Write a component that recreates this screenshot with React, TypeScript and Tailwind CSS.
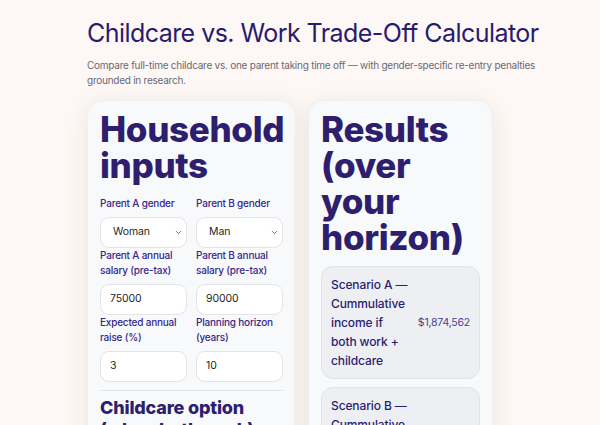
import { ChevronDown } from 'lucide-react';

const SelectBox = ({ value }: { value: string }) => (
  <div className="flex h-[31px] items-center justify-between rounded-[9px] border border-[#e3e3e8] bg-white pl-[12px] pr-[3px] text-[10.5px] tracking-[-0.01em] text-[#1f1f24]">
    <span>{value}</span>
    <ChevronDown className="h-[9px] w-[9px] text-[#444]" strokeWidth={2} />
  </div>
);

const InputBox = ({ value }: { value: string }) => (
  <div className="flex h-[31px] items-center rounded-[9px] border border-[#e3e3e8] bg-white px-[9px] text-[10.5px] tracking-[-0.01em] text-[#1f1f24]">
    {value}
  </div>
);

const Field = ({ label, children }: { label: string; children: React.ReactNode }) => (
  <div className="flex flex-col">
    <label className="mb-[5px] text-[10px] font-medium leading-[15.5px] tracking-[-0.02em] text-[#35288a]">{label}</label>
    {children}
  </div>
);

const ScenarioCard = ({ title, value }: { title: string; value?: string }) => (
  <div className="flex items-center justify-between rounded-[12px] border border-[#e2e2e8] bg-[#eeeff2] py-[8px] pl-[9px] pr-[9px]">
    <p className="w-[78px] text-[12px] font-medium leading-[19px] tracking-[-0.01em] text-[#2a1d72]">{title}</p>
    {value && <span className="text-[10.5px] tracking-[-0.02em] text-[#4b3f90]">{value}</span>}
  </div>
);

export default function App() {
  return (
    <div className="min-h-screen overflow-hidden bg-[#fdf8f5] pl-[87px] pt-[17px] font-['Inter',sans-serif]">
      <h1 className="text-[25px] font-normal leading-[32px] tracking-[-0.022em] text-[#2a1a6e]">
        Childcare vs. Work Trade-Off Calculator
      </h1>
      <p className="mt-[9px] w-[460px] text-[10px] leading-[15px] tracking-[-0.025em] text-[#6a6876]">
        Compare full-time childcare vs. one parent taking time off — with gender-specific re-entry penalties grounded in research.
      </p>

      <div className="mt-[12px] flex items-start gap-[12px]">
        <section className="w-[209px] rounded-[16px] border border-[#efeff3] bg-[#f8f9fb] px-[12px] pb-[20px] pt-[10px] shadow-[0_4px_22px_rgba(110,80,60,0.11)]">
          <h2 className="text-[35px] font-extrabold leading-[36px] tracking-[-0.01em] text-[#2e1f6e]">Household inputs</h2>
          <div className="mt-[13px] grid grid-cols-2 gap-x-[9px]">
            <Field label="Parent A gender">
              <SelectBox value="Woman" />
            </Field>
            <Field label="Parent B gender">
              <SelectBox value="Man" />
            </Field>
            <Field label="Parent A annual salary (pre-tax)">
              <InputBox value="75000" />
            </Field>
            <Field label="Parent B annual salary (pre-tax)">
              <InputBox value="90000" />
            </Field>
            <Field label="Expected annual raise (%)">
              <InputBox value="3" />
            </Field>
            <Field label="Planning horizon (years)">
              <InputBox value="10" />
            </Field>
          </div>
          <hr className="mt-[8px] border-[#e4e4ea]" />
          <h3 className="mt-[6px] text-[18px] font-extrabold leading-[22px] tracking-[-0.01em] text-[#2e1f6e]">Childcare option (when both work)</h3>
        </section>

        <section className="w-[185px] rounded-[16px] border border-[#efeff3] bg-[#f8f9fb] px-[12px] pb-[20px] pt-[10px] shadow-[0_4px_22px_rgba(110,80,60,0.11)]">
          <h2 className="text-[35px] font-extrabold leading-[36px] tracking-[-0.01em] text-[#2e1f6e]">Results (over your horizon)</h2>
          <div className="mt-[11px] flex flex-col gap-[8px]">
            <ScenarioCard title="Scenario A — Cummulative income if both work + childcare" value="$1,874,562" />
            <ScenarioCard title="Scenario B — Cummulative income if one parent stays home" value="$1,512,300" />
          </div>
        </section>
      </div>
    </div>
  );
}
